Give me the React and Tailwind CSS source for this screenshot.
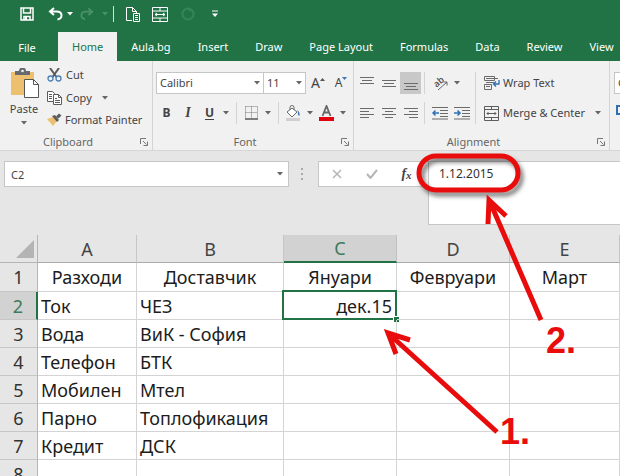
import React from "react";

const tabs = ["Home", "Aula.bg", "Insert", "Draw", "Page Layout", "Formulas", "Data", "Review", "View"];

const columns = ["A", "B", "C", "D", "E"];

const rows = [
  ["Разходи", "Доставчик", "Януари", "Февруари", "Март"],
  ["Ток", "ЧЕЗ", "дек.15", "", ""],
  ["Вода", "ВиК - София", "", "", ""],
  ["Телефон", "БТК", "", "", ""],
  ["Мобилен", "Мтел", "", "", ""],
  ["Парно", "Топлофикация", "", "", ""],
  ["Кредит", "ДСК", "", "", ""],
  ["", "", "", "", ""],
];

function Caret({ className = "text-[#666]" }) {
  return (
    <svg width="6" height="4" viewBox="0 0 6 4" className={"shrink-0 " + className} aria-hidden="true">
      <path d="M0 0h6L3 3.5z" fill="currentColor" />
    </svg>
  );
}

function Lines({ rows, className = "" }) {
  return (
    <svg width="14" height="14" viewBox="0 0 14 14" className={className} aria-hidden="true">
      {rows.map(([x, y, w]) => (
        <path key={y} d={`M${x} ${y + 0.5}h${w}`} stroke="#6b6b6b" />
      ))}
    </svg>
  );
}

function IconButton({ label, className = "w-[22px]", children }) {
  return (
    <button type="button" aria-label={label} className={"flex h-[22px] shrink-0 items-center justify-center " + className}>
      {children}
    </button>
  );
}

function Divider({ className = "h-[22px]" }) {
  return <div className={"w-px shrink-0 bg-[#d4d4d4] " + className} />;
}

function Group({ title, className = "", children }) {
  return (
    <section aria-label={title} className={"flex shrink-0 flex-col border-r border-[#d4d4d4] " + className}>
      <div className="flex-1">{children}</div>
      <div className="relative flex h-4 items-center justify-center pr-4 text-[#666]">
        <span>{title}</span>
        <button type="button" aria-label={title + " settings"} className="absolute right-1 top-1">
          <svg width="8" height="8" viewBox="0 0 8 8" fill="none" stroke="#777" aria-hidden="true">
            <path d="M.5 6V.5H6M3 3l3.500 3.500M7.500 3.500v4h-4" />
          </svg>
        </button>
      </div>
    </section>
  );
}

function QuickAccess() {
  return (
    <div className="flex h-7 items-center pl-4 text-white">
      <IconButton label="Save">
        <svg width="14" height="14" viewBox="0 0 14 14" aria-hidden="true">
          <path d="M1 1h12v12H1zM3.500 1v5h7V1M4 13V9.500h6V13" fill="none" stroke="currentColor" strokeWidth="1.500" />
          <path d="M5 10h2v3H5z" fill="currentColor" />
        </svg>
      </IconButton>
      <IconButton label="Undo" className="w-9 gap-1 pl-2">
        <svg width="15" height="14" viewBox="0 0 15 14" fill="none" stroke="currentColor" strokeWidth="2" aria-hidden="true">
          <path d="M6 1L2 4.500 6 8M2 4.500h6.500c3 0 5 1.500 5 4 0 2-1.500 3.500-4 4" />
        </svg>
        <Caret className="text-white" />
      </IconButton>
      <IconButton label="Redo" className="w-9 gap-2 pl-1 text-[#4a9168]">
        <svg width="14" height="14" viewBox="0 0 15 14" fill="none" stroke="currentColor" strokeWidth="2" aria-hidden="true">
          <path d="M9 1l4 3.500L9 8M13 4.500H6.500c-3 0-5 1.500-5 4 0 2 1.500 3.500 4 4" />
        </svg>
        <Caret className="text-[#4a9168]" />
      </IconButton>
      <div className="ml-[3px] h-4 w-px bg-[#cfe3d7]" />
      <IconButton label="Paste special" className="ml-2 w-[22px]">
        <svg width="15" height="15" viewBox="0 0 15 15" fill="none" stroke="currentColor" aria-hidden="true">
          <path d="M6 13.500H.500V.500h6l4 4V6M6.500.500v4h4" />
          <path d="M7.500 6.500h6v8h-6zM9 8.500h3M9 10.500h3M9 12.500h3" />
        </svg>
      </IconButton>
      <IconButton label="Merge cells" className="ml-1 w-[24px]">
        <svg width="16" height="15" viewBox="0 0 16 15" fill="none" stroke="currentColor" aria-hidden="true">
          <path d="M.5.5h15v14H.5zM.5 4h15M.5 11h15M8 .5V4M8 11v3.500M3 7.500h10M5 6L3 7.500 5 9M11 6l2 1.500L11 9" />
        </svg>
      </IconButton>
      <IconButton label="Repeat" className="ml-1 w-[24px] text-[#38845a]">
        <svg width="14" height="14" viewBox="0 0 14 14" fill="none" stroke="currentColor" strokeWidth="2" aria-hidden="true">
          <circle cx="7" cy="7" r="5.500" />
          <path d="M7 1.500L10 4" />
        </svg>
      </IconButton>
      <IconButton label="Customize" className="ml-[3px] w-[24px]">
        <svg width="6" height="8" viewBox="0 0 6 8" aria-hidden="true">
          <path d="M0 .5h6v1H0zM0 3.500h6L3 7z" fill="currentColor" />
        </svg>
      </IconButton>
    </div>
  );
}

function Clipboard() {
  return (
    <Group title="Clipboard" className="w-[153px]">
      <div className="flex pt-[3px]">
        <button type="button" className="ml-[9px] mt-1 flex w-[30px] flex-col items-center text-[#444]">
          <svg width="29" height="30" viewBox="0 0 29 30" aria-hidden="true">
            <path d="M1 4h23v23H1z" fill="#ecc06f" />
            <path d="M5 7V3h4a3.500 3.500 0 0 1 7 0h4v4z" fill="#66696d" />
            <circle cx="12.500" cy="3" r="1.300" fill="#f1f1f1" />
            <path d="M14.500 11.500h9l5 5v13h-14z" fill="#fff" stroke="#555" />
            <path d="M23.500 11.500v5h5" fill="none" stroke="#555" />
          </svg>
          <span className="mt-[3px] h-4 leading-4">Paste</span>
          <span className="flex h-3 items-center"><Caret /></span>
        </button>
        <div className="ml-2 flex flex-col text-[#444]">
          <button type="button" className="flex h-[22px] items-center gap-1">
            <svg width="15" height="14" viewBox="0 0 15 14" fill="none" aria-hidden="true">
              <path d="M3 0l6.500 9M12 0L5.500 9" stroke="#5c5c5c" strokeWidth="2" />
              <circle cx="3.500" cy="10.500" r="2.500" stroke="#4a80b8" strokeWidth="1.300" />
              <circle cx="11.500" cy="10.500" r="2.500" stroke="#4a80b8" strokeWidth="1.300" />
            </svg>
            Cut
          </button>
          <button type="button" className="flex h-[23px] items-center gap-1">
            <svg width="15" height="14" viewBox="0 0 15 14" fill="#fff" stroke="#5c5c5c" aria-hidden="true">
              <path d="M.5.5h5l2 2v8h-7zM2 3.500h3M2 5.500h3M2 7.500h3" />
              <path d="M6.500 3.500h5l3 3v7h-8zM11.500 3.500v3h3M8 7.500h2M8 9.500h5M8 11.500h5" />
            </svg>
            Copy
            <span className="ml-1.5"><Caret /></span>
          </button>
          <button type="button" className="flex h-[22px] items-center gap-[3px] whitespace-nowrap">
            <svg width="15" height="14" viewBox="0 0 15 14" aria-hidden="true">
              <path d="M0 6l6-2 4 4-4 5z" fill="#ecc06f" />
              <path d="M5 3l3-1 4 5-2 2z" fill="#5c5c5c" />
              <path d="M9 3.500L12 .5l2.500 2-3 3z" fill="#5c5c5c" />
            </svg>
            Format Painter
          </button>
        </div>
      </div>
    </Group>
  );
}

function FontGroup() {
  return (
    <Group title="Font" className="w-[201px]">
      <div className="flex flex-col gap-2 pl-[3px] pt-[11px] text-[#444]">
        <div className="flex h-[22px] items-center">
          <div className="relative h-full w-[108px] shrink-0">
            <select aria-label="Font name" className="h-full w-full appearance-none border border-[#c6c6c6] bg-white pl-[3px]">
              <option>Calibri</option>
            </select>
            <span className="pointer-events-none absolute right-1 top-[9px]"><Caret /></span>
          </div>
          <div className="relative -ml-px h-full w-[43px] shrink-0">
            <select aria-label="Font size" className="h-full w-full appearance-none border border-[#c6c6c6] bg-white pl-[3px]">
              <option>11</option>
            </select>
            <span className="pointer-events-none absolute right-1 top-[9px]"><Caret /></span>
          </div>
          <IconButton label="Increase font size" className="w-6 text-sm">
            A
            <svg width="5" height="10" viewBox="0 0 5 10" aria-hidden="true"><path d="M0 3h5L2.500 0z" fill="#555" /></svg>
          </IconButton>
          <IconButton label="Decrease font size" className="w-[22px] text-xs">
            A
            <svg width="5" height="12" viewBox="0 0 5 12" aria-hidden="true"><path d="M0 0h5L2.500 3z" fill="#3b77b5" /></svg>
          </IconButton>
        </div>
        <div className="flex h-[22px] items-center">
          <IconButton label="Bold" className="w-[21px] text-xs font-bold">B</IconButton>
          <IconButton label="Italic" className="w-[22px] font-['Liberation_Serif',serif] text-sm font-bold italic">I</IconButton>
          <IconButton label="Underline" className="w-[21px] text-xs font-bold underline underline-offset-2">U</IconButton>
          <IconButton label="Underline style" className="w-3"><Caret /></IconButton>
          <Divider className="ml-1 h-[22px]" />
          <IconButton label="Borders" className="ml-[3px] w-[22px]">
            <svg width="13" height="14" viewBox="0 0 13 14" fill="none" stroke="#777" aria-hidden="true">
              <path d="M.5.5h12v12M.5.5v12M6.500.500v12M.5 6.500h12" strokeDasharray="1 1" />
              <path d="M0 13h13" stroke="#555" strokeWidth="1.500" />
            </svg>
          </IconButton>
          <IconButton label="Border style" className="w-3"><Caret /></IconButton>
          <Divider className="ml-1 h-[22px]" />
          <IconButton label="Fill color" className="ml-[3px] w-[22px]">
            <svg width="16" height="16" viewBox="0 0 16 16" fill="none" aria-hidden="true">
              <path d="M2 7l5-4 5 4-5 5zM5 5V2.500a2 2 0 0 1 4 0V5" fill="#fff" stroke="#666" />
              <path d="M12 5c2 1 3 3 2.500 6-1.500-.5-2-2-1.500-4z" fill="#3b77b5" />
              <path d="M1 13h14v3H1z" fill="#d0d0d0" />
            </svg>
          </IconButton>
          <IconButton label="Fill color list" className="w-3"><Caret /></IconButton>
          <IconButton label="Font color" className="w-[21px]">
            <svg width="15" height="16" viewBox="0 0 15 16" fill="none" aria-hidden="true">
              <path d="M3.500 11l4-10 4 10M5 7.500h5" stroke="#666" strokeWidth="1.800" />
              <path d="M0 12h15v4H0z" fill="#e3000f" />
            </svg>
          </IconButton>
          <IconButton label="Font color list" className="w-3"><Caret /></IconButton>
        </div>
      </div>
    </Group>
  );
}

function Indent({ out }) {
  return (
    <svg width="16" height="14" viewBox="0 0 16 14" fill="none" aria-hidden="true">
      <path d="M0 1.500h16M8 4.500h8M8 7.500h8M8 10.500h8M0 13h16" stroke="#6b6b6b" />
      <path d={out ? "M7 7H1M3.500 4.500L1 7l2.500 2.500" : "M0 7h6M3.500 4.500L6 7 3.500 9.500"} stroke="#2f6fb3" strokeWidth="1.500" />
    </svg>
  );
}

function Alignment() {
  return (
    <Group title="Alignment" className="w-[256px]">
      <div className="flex pl-0.5 pt-[11px] text-[#444]">
        <div className="flex w-[119px] flex-col gap-2">
          <div className="flex h-[22px] items-center">
            <IconButton label="Top align">
              <Lines rows={[[0, 1, 14], [2, 4, 10], [0, 7, 14]]} />
            </IconButton>
            <IconButton label="Middle align">
              <Lines rows={[[0, 4, 14], [2, 7, 10], [0, 10, 14]]} />
            </IconButton>
            <IconButton label="Bottom align" className="w-[21px] bg-[#c8c8c8]">
              <Lines rows={[[0, 7, 14], [2, 10, 10], [0, 13, 14]]} />
            </IconButton>
            <Divider className="ml-[3px] h-[22px]" />
            <IconButton label="Orientation" className="ml-1 w-[34px] gap-1">
              <svg width="18" height="18" viewBox="0 0 18 18" fill="none" className="overflow-visible" aria-hidden="true">
                <text x="2" y="11" fontSize="9" fontWeight="600" fill="#555" transform="rotate(-40 7 9)">ab</text>
                <path d="M6 16l9-8M11.500 8H15v3.500" stroke="#666" />
              </svg>
              <Caret />
            </IconButton>
          </div>
          <div className="flex h-[22px] items-center">
            <IconButton label="Align left">
              <Lines rows={[[0, 2, 14], [0, 5, 9], [0, 8, 14], [0, 11, 9]]} />
            </IconButton>
            <IconButton label="Center">
              <Lines rows={[[0, 2, 14], [3, 5, 8], [0, 8, 14], [3, 11, 8]]} />
            </IconButton>
            <IconButton label="Align right" className="w-[21px]">
              <Lines rows={[[0, 2, 14], [5, 5, 9], [0, 8, 14], [5, 11, 9]]} />
            </IconButton>
            <Divider className="ml-[3px] h-[22px]" />
            <IconButton label="Decrease indent" className="ml-1 w-[22px]"><Indent out /></IconButton>
            <IconButton label="Increase indent"><Indent /></IconButton>
          </div>
        </div>
        <Divider className="h-[52px]" />
        <div className="ml-2 flex flex-col gap-2">
          <button type="button" className="flex h-[22px] items-center gap-[3px]">
            <svg width="16" height="15" viewBox="0 0 16 15" fill="none" aria-hidden="true">
              <path d="M.5.5h10v4H.5zM.5 8.500h7v5h-7zM2 2.500h12M2 10.500h4M2 6.500h8" stroke="#6b6b6b" />
              <path d="M15 4v4H9.500M12 5.500L9.500 8l2.500 2.500" stroke="#2f6fb3" strokeWidth="1.300" />
            </svg>
            Wrap Text
          </button>
          <button type="button" className="flex h-[22px] items-center gap-1 whitespace-nowrap">
            <svg width="15" height="15" viewBox="0 0 15 15" fill="none" stroke="#5c5c5c" aria-hidden="true">
              <path d="M.5.5h14v14H.5zM.5 3.500h14M.5 11.500h14M7.500.500v3M7.500 11.500v3M3 7.500h9M4.500 6L3 7.500 4.500 9M10.500 6L12 7.500 10.500 9" />
            </svg>
            Merge &amp; Center
            <span className="ml-1.5"><Caret /></span>
          </button>
        </div>
      </div>
    </Group>
  );
}

function FormulaBar() {
  return (
    <div className="flex h-[85px] items-start border-t border-[#d6d6d6] bg-[#e6e6e6] pl-1 pt-[10px] text-[#444]">
      <div className="relative h-[26px] w-[285px] shrink-0">
        <input aria-label="Name box" defaultValue="C2" className="h-full w-full border border-[#c6c6c6] bg-white px-1.5" />
        <span className="pointer-events-none absolute right-1.5 top-[11px]"><Caret /></span>
      </div>
      <svg width="3" height="12" viewBox="0 0 3 12" className="ml-3 mt-[7px] shrink-0" aria-hidden="true">
        <path d="M0 0h2v2H0zM0 5h2v2H0zM0 10h2v2H0z" fill="#aaa" />
      </svg>
      <div className="ml-[14px] flex h-[26px] w-[110px] shrink-0 items-center border border-r-0 border-[#c6c6c6] bg-white">
        <IconButton label="Cancel" className="w-[35px]">
          <svg width="10" height="10" viewBox="0 0 10 10" stroke="#b5b5b5" strokeWidth="1.500" aria-hidden="true">
            <path d="M1 1l8 8M9 1L1 9" />
          </svg>
        </IconButton>
        <IconButton label="Enter" className="w-9">
          <svg width="12" height="10" viewBox="0 0 12 10" fill="none" stroke="#b5b5b5" strokeWidth="2" aria-hidden="true">
            <path d="M1 5l3.500 4L11 1" />
          </svg>
        </IconButton>
        <IconButton label="Insert function" className="w-[33px] font-['Liberation_Serif',serif] text-sm font-bold italic">
          f<span className="pt-1 text-[11px]">x</span>
        </IconButton>
      </div>
      <textarea
        aria-label="Formula"
        defaultValue="1.12.2015"
        className="h-[64px] min-w-0 flex-1 resize-none border border-r-0 border-[#c6c6c6] bg-white pl-2.5 pt-1 text-xs text-[#333]"
      />
    </div>
  );
}

function Sheet() {
  return (
    <table className="w-full table-fixed border-separate border-spacing-0 font-['Noto_Sans',sans-serif] text-lg leading-6 text-[#1c1c1c]">
      <colgroup>
        <col className="w-[38px]" />
        <col className="w-[99px]" />
        <col className="w-[147px]" />
        <col className="w-[113px]" />
        <col className="w-[113px]" />
        <col />
      </colgroup>
      <thead>
        <tr className="h-7 bg-[#e6e6e6]">
          <th className="border-b border-r border-[#b4b4b4] p-0">
            <svg width="18" height="18" viewBox="0 0 18 18" className="ml-auto mr-[3px]" aria-hidden="true">
              <path d="M18 0v18H0z" fill="#b4b4b4" />
            </svg>
          </th>
          {columns.map((name) => (
            <th
              key={name}
              scope="col"
              className={
                name === "C"
                  ? "border-b-2 border-r border-b-[#217346] border-r-[#c0c0c0] bg-[#d2d2d2] p-0 font-normal text-[#3d7b5a]"
                  : "border-b border-r border-b-[#ababab] border-r-[#c6c6c6] p-0 font-normal text-[#444]"
              }
            >
              {name}
            </th>
          ))}
        </tr>
      </thead>
      <tbody>
        {rows.map((cells, r) => (
          <tr key={r} className={r === 0 ? "h-[29px]" : "h-7"}>
            <th
              scope="row"
              className={
                r === 1
                  ? "border-b border-r-2 border-b-[#c6c6c6] border-r-[#217346] bg-[#d2d2d2] p-0 font-normal text-[#3d7b5a]"
                  : "border-b border-r border-b-[#c6c6c6] border-r-[#b4b4b4] bg-[#e6e6e6] p-0 font-normal text-[#333]"
              }
            >
              {r + 1}
            </th>
            {cells.map((text, c) => {
              const active = r === 1 && c === 2;
              return (
                <td
                  key={c}
                  className={
                    "relative whitespace-nowrap border-b border-r border-[#d4d4d4] py-0 " +
                    (r === 0 ? "px-0 text-center" : active ? "px-1 text-right" : "px-[3px]")
                  }
                >
                  {text}
                  {active && (
                    <>
                      <span className="absolute -inset-px -left-[2px] -top-[2px] border-2 border-[#217346]" />
                      <span className="absolute -bottom-[3px] -right-[3px] size-[6px] border-l border-t border-white bg-[#217346]" />
                    </>
                  )}
                </td>
              );
            })}
          </tr>
        ))}
      </tbody>
    </table>
  );
}

function Callouts() {
  return (
    <div className="pointer-events-none absolute left-0 top-0 font-['Liberation_Sans',sans-serif] text-4xl font-bold text-[#e80c0c]">
      <svg width="620" height="476" viewBox="0 0 620 476" fill="none" stroke="#e80c0c" strokeWidth="5" aria-hidden="true">
        <rect x="419" y="156" width="99" height="34" rx="17" className="drop-shadow-[3px_4px_2px_rgba(0,0,0,0.5)]" />
        <path d="M541 320L490 202M506 216L489 200L488 224" />
        <path d="M497 432L389 334M410 340L388 333L396 354" />
      </svg>
      <span className="absolute left-[500px] top-[412px]">1.</span>
      <span className="absolute left-[546px] top-[321px]">2.</span>
    </div>
  );
}

export default function App() {
  return (
    <div className="relative h-screen overflow-hidden bg-white font-['Noto_Sans',sans-serif] text-[11px] leading-4">
      <header className="bg-[#217346]">
        <QuickAccess />
        <nav className="flex h-[33px] items-end pb-0 pt-1 text-white">
          <button type="button" className="h-[29px] w-[58px] shrink-0 pr-1 pt-0.5">File</button>
          {tabs.map((tab) => (
            <button
              key={tab}
              type="button"
              className={
                "h-[29px] shrink-0 whitespace-nowrap pl-3.5 " +
                (tab === "Home" ? "bg-[#f1f1f1] pr-3.5 text-[#217346]" : "pr-[13px]")
              }
            >
              {tab}
            </button>
          ))}
        </nav>
      </header>
      <div className="flex h-[89px] bg-[#f1f1f1]">
        <Clipboard />
        <FontGroup />
        <Alignment />
        <div className="flex flex-1 flex-col gap-2 overflow-hidden pl-1 pt-[11px]">
          <select aria-label="Number format" className="h-[22px] w-28 shrink-0 appearance-none border border-[#c6c6c6] bg-white pl-[3px] text-[#444]">
            <option>General</option>
          </select>
          <IconButton label="Accounting format" className="w-5">
            <svg width="16" height="16" viewBox="0 0 16 16" fill="none" stroke="#2f6fb3" strokeWidth="2" aria-hidden="true">
              <path d="M1 1h14v8H1zM6 5h4" />
            </svg>
          </IconButton>
        </div>
      </div>
      <FormulaBar />
      <Sheet />
      <Callouts />
    </div>
  );
}
